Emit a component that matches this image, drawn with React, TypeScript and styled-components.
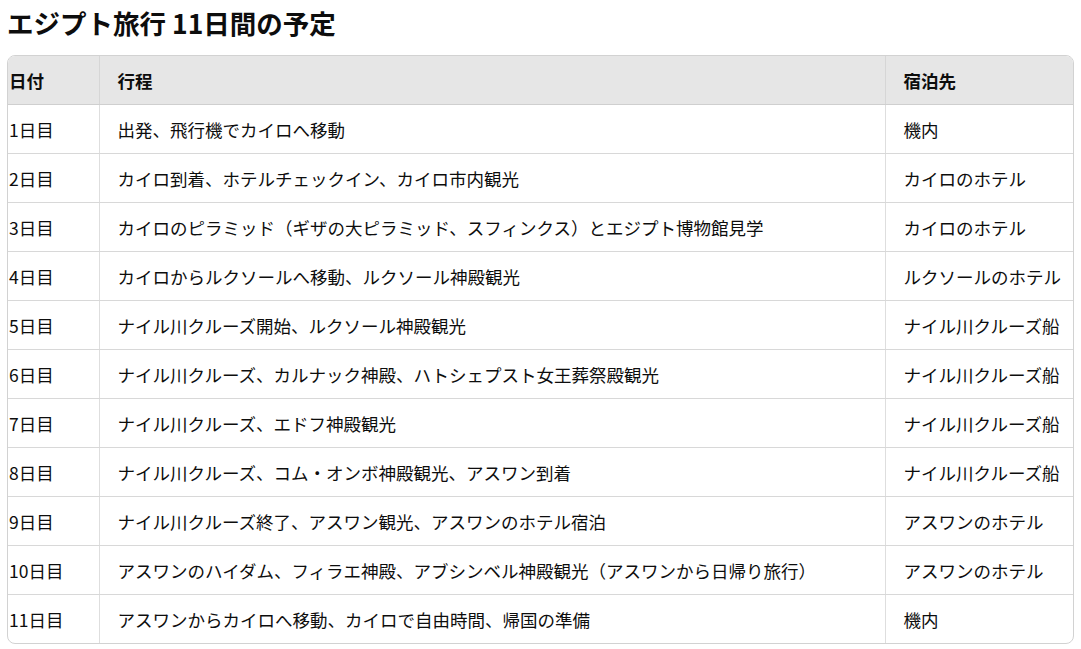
import React, { FC } from 'react';
import styled, { createGlobalStyle } from 'styled-components';

const GlobalStyle = createGlobalStyle`
    html, body {
        margin: 0;
        padding: 0;
        background: #ffffff;
    }
    body {
        font-family: "Noto Sans CJK JP", "Noto Sans", sans-serif;
        color: #0d0d0d;
    }
`

const Root = styled.div`
    padding: 0 7px;
`

const Title = styled.h1`
    margin: 0;
    height: 55px;
    display: flex;
    align-items: center;
    padding-bottom: 11px;
    box-sizing: border-box;
    font-size: 26.5px;
    font-weight: 700;
`

const TableWrapper = styled.div`
    border: 1px solid #d2d2d2;
    border-radius: 8px;
    overflow: hidden;
`

const Table = styled.table`
    width: 100%;
    border-collapse: collapse;
    table-layout: fixed;
`

const HeadRow = styled.tr`
    background-color: #e6e6e6;
`

const Row = styled.tr`
    &:not(:last-child) td {
        border-bottom: 1px solid #d8d8d8;
    }
`

const HeadCell = styled.th<{ $first?: boolean }>`
    height: 48px;
    padding: 0 0 0 ${p => (p.$first ? '1px' : '18px')};
    text-align: left;
    font-size: 17.5px;
    font-weight: 700;
    border-bottom: 1px solid #cfcfcf;
    border-left: ${p => (p.$first ? 'none' : '1px solid #d6d6d6')};
`

const Cell = styled.td<{ $first?: boolean }>`
    height: 48px;
    padding: 0 0 0 ${p => (p.$first ? '1px' : '18px')};
    font-size: 17.5px;
    font-weight: 400;
    white-space: nowrap;
    border-left: ${p => (p.$first ? 'none' : '1px solid #dedede')};
`

interface Day {
    day: string;
    plan: string;
    stay: string;
}

const days: Day[] = [
    { day: '1日目', plan: '出発、飛行機でカイロへ移動', stay: '機内' },
    { day: '2日目', plan: 'カイロ到着、ホテルチェックイン、カイロ市内観光', stay: 'カイロのホテル' },
    { day: '3日目', plan: 'カイロのピラミッド（ギザの大ピラミッド、スフィンクス）とエジプト博物館見学', stay: 'カイロのホテル' },
    { day: '4日目', plan: 'カイロからルクソールへ移動、ルクソール神殿観光', stay: 'ルクソールのホテル' },
    { day: '5日目', plan: 'ナイル川クルーズ開始、ルクソール神殿観光', stay: 'ナイル川クルーズ船' },
    { day: '6日目', plan: 'ナイル川クルーズ、カルナック神殿、ハトシェプスト女王葬祭殿観光', stay: 'ナイル川クルーズ船' },
    { day: '7日目', plan: 'ナイル川クルーズ、エドフ神殿観光', stay: 'ナイル川クルーズ船' },
    { day: '8日目', plan: 'ナイル川クルーズ、コム・オンボ神殿観光、アスワン到着', stay: 'ナイル川クルーズ船' },
    { day: '9日目', plan: 'ナイル川クルーズ終了、アスワン観光、アスワンのホテル宿泊', stay: 'アスワンのホテル' },
    { day: '10日目', plan: 'アスワンのハイダム、フィラエ神殿、アブシンベル神殿観光（アスワンから日帰り旅行）', stay: 'アスワンのホテル' },
    { day: '11日目', plan: 'アスワンからカイロへ移動、カイロで自由時間、帰国の準備', stay: '機内' },
];

const App: FC = () => {
    return (
        <Root>
            <GlobalStyle />
            <Title>エジプト旅行 11日間の予定</Title>
            <TableWrapper>
                <Table>
                    <colgroup>
                        <col style={{ width: 91 }} />
                        <col />
                        <col style={{ width: 188 }} />
                    </colgroup>
                    <thead>
                        <HeadRow>
                            <HeadCell $first>日付</HeadCell>
                            <HeadCell>行程</HeadCell>
                            <HeadCell>宿泊先</HeadCell>
                        </HeadRow>
                    </thead>
                    <tbody>
                        {days.map(d => (
                            <Row key={d.day}>
                                <Cell $first>{d.day}</Cell>
                                <Cell>{d.plan}</Cell>
                                <Cell>{d.stay}</Cell>
                            </Row>
                        ))}
                    </tbody>
                </Table>
            </TableWrapper>
        </Root>
    );
}

export default App;
